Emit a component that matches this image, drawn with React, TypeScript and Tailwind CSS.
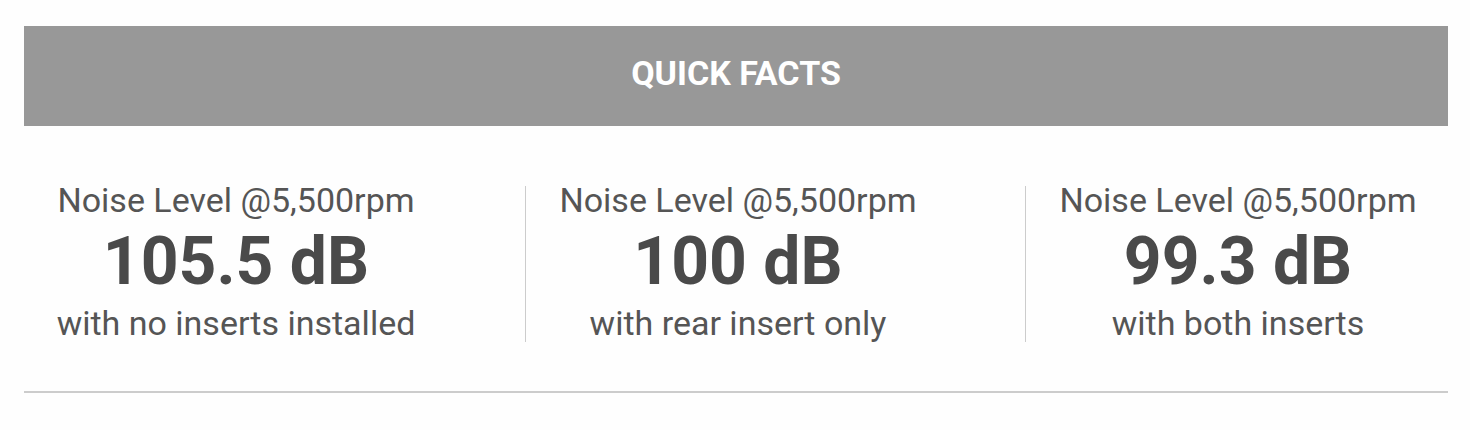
import React from 'react';

interface Fact {
  label: string;
  value: string;
  note: string;
}

const facts: Fact[] = [
  { label: 'Noise Level @5,500rpm', value: '105.5 dB', note: 'with no inserts installed' },
  { label: 'Noise Level @5,500rpm', value: '100 dB', note: 'with rear insert only' },
  { label: 'Noise Level @5,500rpm', value: '99.3 dB', note: 'with both inserts' },
];

export default function App() {
  return (
    <div className="w-[1470px] h-[430px] bg-[#fefefe] overflow-hidden font-['Roboto',sans-serif]">
      <div className="pt-[26px] pl-[24px] w-[1448px]">
        {/* Header */}
        <div className="h-[100px] bg-[#989898] flex items-center justify-center pb-[6px]">
          <h2 className="text-[34px] leading-[34px] font-bold text-white uppercase">Quick Facts</h2>
        </div>

        {/* Facts */}
        <div className="flex mt-[60px]">
          {facts.map((fact, i) => (
            <div
              key={i}
              className={
                i === 0
                  ? 'w-[501px] shrink-0 h-[156px]'
                  : 'w-[500px] shrink-0 h-[156px] border-l border-[#cccccc]'
              }
            >
              <div className="w-[424px] text-center text-[#555555] -mt-[3px]">
                <p className="text-[34px] leading-[34px]">{fact.label}</p>
                <p className="text-[66px] leading-[66px] font-bold text-[#4a4a4a] mt-[12px]">{fact.value}</p>
                <p className="text-[34px] leading-[34px] mt-[11px]">{fact.note}</p>
              </div>
            </div>
          ))}
        </div>

        <div className="mt-[49px] border-t-2 border-[#cccccc]" />
      </div>
    </div>
  );
}
